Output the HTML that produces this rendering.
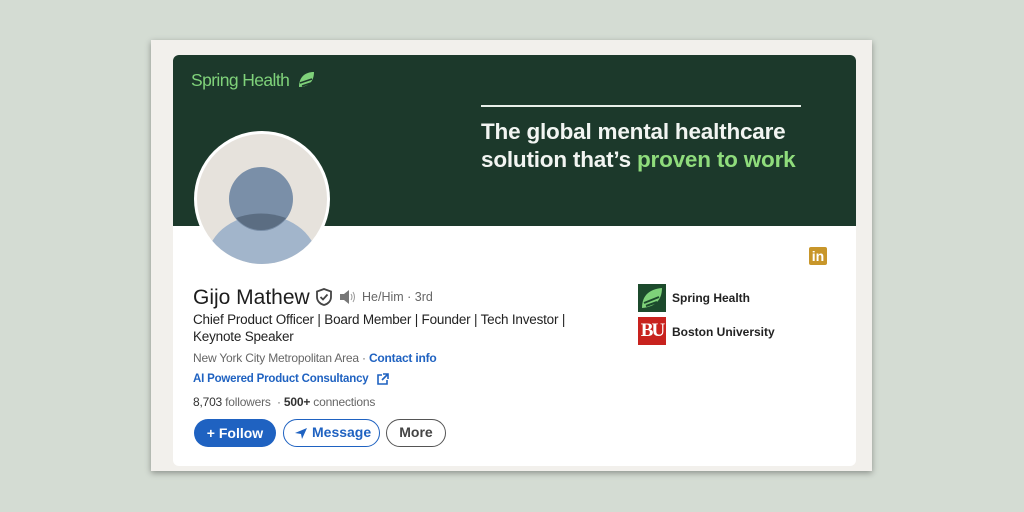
<!DOCTYPE html>
<html><head><meta charset="utf-8"><style>
*{margin:0;padding:0;box-sizing:border-box}
body{width:1024px;height:512px;background:#d4dcd3;position:relative;overflow:hidden;font-family:"Liberation Sans",sans-serif}
.frame{position:absolute;left:151px;top:40px;width:721px;height:431px;background:#f2f0ec;box-shadow:0 2px 6px rgba(0,0,0,.35)}
.card{position:absolute;left:173px;top:55px;width:683px;height:411px;background:#fff;border-radius:6px;overflow:hidden}
.banner{position:absolute;left:0;top:0;width:683px;height:171px;background:#1c392b}
.abs{position:absolute;white-space:nowrap}
</style></head><body>
<div class="frame"></div>
<div class="card">
 <div class="banner">
  <div class="abs" style="left:18px;top:15px;color:#7fd27a;font-size:17.5px;letter-spacing:-0.6px">Spring Health</div>
  <svg class="abs" style="left:124px;top:16px" width="18" height="17" viewBox="0 0 18 17"><path d="M2 16 C2 6 8 1 17 1 C17 10 12 16 2 16Z" fill="#7fd27a"/><path d="M3 12 L15 8 M5 15 L14 12" stroke="#1c392b" stroke-width="1.6"/></svg>
  <div class="abs" style="left:308px;top:50px;width:320px;height:2px;background:#e8efe9"></div>
  <div class="abs" style="left:308px;top:63px;color:#f2f5f2;font-size:22.5px;font-weight:bold;line-height:28px;letter-spacing:-0.2px">The global mental healthcare<br>solution that’s <span style="color:#8fdc7c">proven to work</span></div>
 </div>
 <svg class="abs" style="left:21px;top:76px" width="136" height="136" viewBox="0 0 136 136">
  <defs><clipPath id="c"><circle cx="68" cy="68" r="65"/></clipPath></defs>
  <circle cx="68" cy="68" r="68" fill="#fff"/>
  <circle cx="68" cy="68" r="65" fill="#e6e2dc"/>
  <g clip-path="url(#c)">
   <ellipse cx="68" cy="132" rx="56" ry="48" fill="#a2b5cb"/>
   <circle cx="67" cy="68" r="32" fill="#7a8fa8"/>
   <path d="M42 87 Q67 78 92 87 A32 32 0 0 1 42 87Z" fill="#5b6d82"/>
  </g>
 </svg>
 <div class="abs" style="left:636px;top:192px;width:18px;height:18px;background:#c8962a;border-radius:2px;color:#fff;font-weight:bold;font-size:14px;line-height:18px;text-align:center">in</div>
 <div class="abs" style="left:20px;top:231px;font-size:21px;color:#1d1d1d">Gijo Mathew</div>
 <svg class="abs" style="left:143px;top:233px" width="16" height="18" viewBox="0 0 16 18"><path d="M8 1 L15 3.5 V9 C15 13 12 16 8 17 C4 16 1 13 1 9 V3.5Z" fill="none" stroke="#444" stroke-width="1.8"/><path d="M4.5 9 L7 11.5 L11.5 6.5" fill="none" stroke="#444" stroke-width="1.8"/></svg>
 <svg class="abs" style="left:166px;top:235px" width="18" height="14" viewBox="0 0 18 14"><path d="M1 4 H5 L10 0 V14 L5 10 H1Z" fill="#777"/><path d="M12 4 Q14 7 12 10 M14 2 Q17 7 14 12" stroke="#999" fill="none" stroke-width="1"/></svg>
 <div class="abs" style="left:189px;top:235px;font-size:12.5px;color:#666">He/Him · 3rd</div>
 <div class="abs" style="left:20px;top:256px;font-size:13.5px;color:#222;line-height:17px;letter-spacing:-0.2px">Chief Product Officer | Board Member | Founder | Tech Investor |<br>Keynote Speaker</div>
 <div class="abs" style="left:20px;top:296px;font-size:12px;color:#666;letter-spacing:-0.2px">New York City Metropolitan Area · <b style="color:#1f62c1">Contact info</b></div>
 <div class="abs" style="left:20px;top:318px;font-size:11.5px;color:#1f62c1;font-weight:bold;letter-spacing:-0.2px">AI Powered Product Consultancy</div>
 <svg class="abs" style="left:203px;top:318px" width="13" height="13" viewBox="0 0 13 13"><path d="M6 2 H2 V11 H11 V7 M7 1 H12 V6 M12 1 L6 7" fill="none" stroke="#1f62c1" stroke-width="1.6"/></svg>
 <div class="abs" style="left:20px;top:340px;font-size:12px;color:#666;letter-spacing:-0.2px"><b style="color:#333;font-weight:normal">8,703</b> followers &nbsp;· <b style="color:#333">500+</b> connections</div>
 <div class="abs" style="left:21px;top:364px;width:82px;height:28px;background:#1f62c1;border-radius:14px;color:#fff;font-weight:bold;font-size:14px;line-height:28px;text-align:center">+ Follow</div>
 <div class="abs" style="left:110px;top:364px;width:97px;height:28px;border:1.5px solid #1f62c1;border-radius:14px;color:#1f62c1;font-weight:bold;font-size:14px;line-height:25px;padding-left:28px">Message</div>
 <svg class="abs" style="left:122px;top:373px" width="12" height="11" viewBox="0 0 12 11"><path d="M0 5 L12 0 L7 11 L6 6Z" fill="#1f62c1"/></svg>
 <div class="abs" style="left:213px;top:364px;width:60px;height:28px;border:1.5px solid #555;border-radius:14px;color:#444;font-weight:bold;font-size:14px;line-height:25px;text-align:center">More</div>
 <div class="abs" style="left:465px;top:229px;width:28px;height:28px;background:#1c4a2c"><svg width="28" height="28" viewBox="0 0 28 28"><path d="M4 24 C4 11 12 5 24 4 C24 16 17 23 4 24Z" fill="#7fd27a"/><path d="M6 19 L21 13 M8 22 L19 18" stroke="#1c4a2c" stroke-width="2"/></svg></div>
 <div class="abs" style="left:499px;top:236px;font-size:12px;color:#222;font-weight:bold">Spring Health</div>
 <div class="abs" style="left:465px;top:262px;width:28px;height:28px;background:#c8221e;color:#fff;font-weight:bold;font-size:19px;line-height:28px;text-align:center;letter-spacing:-2px;font-family:'Liberation Serif',serif">BU</div>
 <div class="abs" style="left:499px;top:270px;font-size:12px;color:#222;font-weight:bold">Boston University</div>
</div>
</body></html>
